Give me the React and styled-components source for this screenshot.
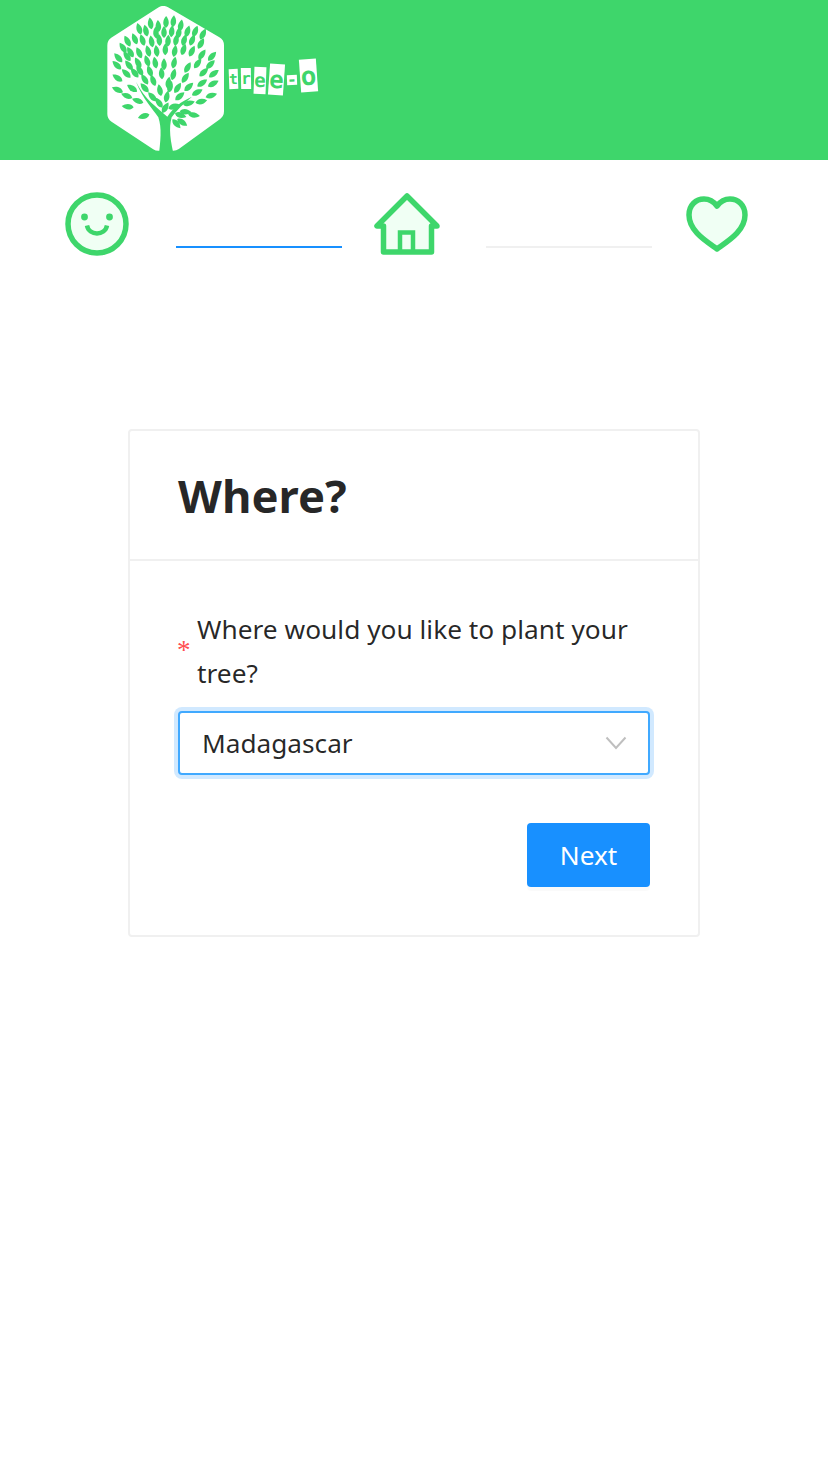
import React from "react";
import styled, { createGlobalStyle } from "styled-components";

const GREEN = "#3ed66b";
const TINT = "#f0fff4";

const GlobalStyle = createGlobalStyle`
  html, body {
    margin: 0;
    padding: 0;
    background: #fff;
    font-family: "Noto Sans", "Open Sans", sans-serif;
    color: rgba(0, 0, 0, 0.85);
  }
`;

// leaf positions, in the 720x480 space of the logo drawing
const leaves = [
  [182, 72], [205, 80], [228, 68], [250, 66], [272, 78],
  [148, 88], [168, 94], [198, 100], [222, 98], [245, 96], [266, 100], [292, 96], [315, 96], [338, 104],
  [113, 125], [135, 118], [158, 122], [185, 126], [208, 122], [234, 124], [258, 122], [282, 122], [306, 122], [332, 132],
  [100, 145], [122, 158], [148, 160], [175, 155], [200, 155], [226, 150], [254, 155], [280, 150], [305, 155], [335, 165], [365, 170],
  [86, 175], [112, 170], [145, 190], [172, 185], [196, 190], [222, 195], [252, 190], [292, 204], [322, 192], [360, 195],
  [82, 197], [118, 197], [150, 213], [180, 215], [215, 222], [250, 225], [285, 235], [340, 218], [370, 222],
  [84, 235], [110, 222], [135, 220], [165, 240], [190, 243], [235, 250], [262, 265], [295, 262], [335, 250], [368, 252],
  [84, 270], [128, 266], [165, 265], [210, 272], [240, 262], [320, 278], [362, 287],
  [112, 288], [188, 292], [230, 292], [268, 290], [332, 305],
  [115, 320], [145, 303], [208, 310], [225, 325], [250, 320], [295, 310], [310, 345],
  [163, 348], [270, 345], [285, 335], [258, 370], [275, 366],
];

function leafAngle(x, y) {
  return (Math.atan2(y - 330, x - 222) * 180) / Math.PI + 90;
}

function LogoMark() {
  return (
    <svg width="120" height="154" viewBox="0 0 360 462">
      <g transform="translate(-51 -18)">
        <path
          d="M220 46 L374 136 V334 L250 424 L205 424 L80 342 V136 Z"
          fill="#fff"
          stroke="#fff"
          strokeWidth="56"
          strokeLinejoin="round"
        />
        <path
          d="M138 245 C160 300 188 325 205 352 C216 385 212 420 205 480 H255 C240 420 236 385 245 352 C262 328 282 310 306 290 C272 305 250 322 232 350 C200 320 165 300 138 245 Z"
          fill={GREEN}
        />
        {leaves.map(([x, y]) => (
          <path
            key={`${x}-${y}`}
            d="M0 16 C-12 7 -10 -8 0 -20 C10 -8 12 7 0 16 Z"
            fill={GREEN}
            transform={`translate(${x} ${y}) rotate(${leafAngle(x, y)})`}
          />
        ))}
      </g>
    </svg>
  );
}

function SmileIcon() {
  return (
    <svg width="66" height="66" viewBox="0 0 66 66">
      <circle cx="33" cy="33" r="29" fill={TINT} stroke={GREEN} strokeWidth="5.5" />
      <circle cx="20.5" cy="26" r="3.4" fill={GREEN} />
      <circle cx="45.5" cy="26" r="3.4" fill={GREEN} />
      <path d="M23 34.5 C25 45 41 45 43 34.5" fill="none" stroke={GREEN} strokeWidth="4.5" />
    </svg>
  );
}

function HomeIcon() {
  return (
    <svg width="66" height="62" viewBox="0 0 66 62">
      <path
        d="M33 3 L3 33 H9.5 V59 H57.5 V33 H63 Z"
        fill={TINT}
        stroke={GREEN}
        strokeWidth="5.5"
        strokeLinejoin="round"
      />
      <path d="M26 59 V39.5 H39 V59" fill="none" stroke={GREEN} strokeWidth="4.5" />
    </svg>
  );
}

function HeartIcon() {
  return (
    <svg width="62" height="56" viewBox="0 0 62 56">
      <path
        d="M31 53 C20 45 3 35 3 19 C3 9 10 3 18 3 C24 3 28 6 31 10 C34 6 38 3 44 3 C52 3 59 9 59 19 C59 35 42 45 31 53 Z"
        fill={TINT}
        stroke={GREEN}
        strokeWidth="5.5"
        strokeLinejoin="round"
      />
    </svg>
  );
}

function Chevron() {
  return (
    <svg width="22" height="14" viewBox="0 0 22 14">
      <path d="M1.5 1.5 L11 12 L20.5 1.5" fill="none" stroke="#bfbfbf" strokeWidth="2" />
    </svg>
  );
}

const tiles = [
  { ch: "t", w: 9, h: 20, rot: -2, up: 0 },
  { ch: "r", w: 10, h: 21, rot: -1, up: 0 },
  { ch: "e", w: 12, h: 27, rot: 2, up: 2 },
  { ch: "e", w: 15, h: 31, rot: 4, up: 1 },
  { ch: "-", w: 10, h: 10, rot: -2, up: 1 },
  { ch: "o", w: 17, h: 33, rot: -4, up: -3 },
];

export default function App() {
  return (
    <Page>
      <GlobalStyle />
      <Header>
        <LogoMark />
        <WordMark>
          {tiles.map((t, i) => (
            <Tile key={i} $w={t.w} $h={t.h} $rot={t.rot} $up={t.up}>
              {t.ch}
            </Tile>
          ))}
        </WordMark>
      </Header>
      <StepsRow>
        <StepIcon $gap={0}>
          <SmileIcon />
        </StepIcon>
        <StepLine $done />
        <StepIcon $gap={32}>
          <HomeIcon />
        </StepIcon>
        <StepLine />
        <StepIcon $gap={34}>
          <HeartIcon />
        </StepIcon>
      </StepsRow>
      <Card>
        <CardHead>
          <CardTitle>Where?</CardTitle>
        </CardHead>
        <CardBody>
          <FieldLabel>
            <Required>*</Required>
            <LabelText>Where would you like to plant your tree?</LabelText>
          </FieldLabel>
          <SelectBox>
            <span>Madagascar</span>
            <Chevron />
          </SelectBox>
          <Actions>
            <NextButton>Next</NextButton>
          </Actions>
        </CardBody>
      </Card>
    </Page>
  );
}

const Page = styled.div`
  width: 828px;
  min-height: 1470px;
  background: #fff;
`;

const Header = styled.header`
  height: 160px;
  background: ${GREEN};
  display: flex;
  align-items: flex-start;
  padding: 6px 0 0 107px;
  box-sizing: border-box;
  overflow: hidden;
`;

const WordMark = styled.div`
  display: flex;
  align-items: center;
  gap: 3px;
  margin: 56px 0 0 2px;
`;

const Tile = styled.span`
  display: flex;
  align-items: center;
  justify-content: center;
  flex: none;
  width: ${(p) => p.$w}px;
  height: ${(p) => p.$h}px;
  background: #fff;
  color: ${GREEN};
  font-family: "DejaVu Sans Mono", monospace;
  font-size: ${(p) => Math.min(p.$w * 1.6, 26)}px;
  font-weight: 700;
  line-height: 1;
  transform: translateY(${(p) => p.$up}px) rotate(${(p) => p.$rot}deg);
`;

const StepsRow = styled.nav`
  display: flex;
  align-items: flex-start;
  padding: 31px 0 0 64px;
  height: 269px;
  box-sizing: border-box;
`;

const StepIcon = styled.div`
  display: flex;
  margin-left: ${(p) => p.$gap}px;
  margin-top: ${(p) => (p.$gap === 34 ? 5 : p.$gap === 32 ? 2 : 0)}px;
`;

const StepLine = styled.div`
  width: 166px;
  height: 2px;
  margin: 55px 0 0 46px;
  background: ${(p) => (p.$done ? "#1890ff" : "#f0f0f0")};
`;

const Card = styled.section`
  width: 572px;
  box-sizing: border-box;
  margin: 0 auto;
  border: 2px solid #f0f0f0;
  border-radius: 4px;
`;

const CardHead = styled.div`
  height: 130px;
  box-sizing: border-box;
  padding: 0 48px;
  display: flex;
  align-items: center;
  border-bottom: 2px solid #f0f0f0;
`;

const CardTitle = styled.h1`
  margin: 0;
  font-size: 45.4px;
  font-weight: 700;
  color: rgba(0, 0, 0, 0.85);
`;

const CardBody = styled.div`
  padding: 46px 48px 48px;
`;

const FieldLabel = styled.div`
  display: flex;
  align-items: center;
  margin-bottom: 16px;
`;

const Required = styled.span`
  flex: none;
  width: 11px;
  margin: -2px 8px 0 -1px;
  color: #ff4d4f;
  font-family: "Liberation Serif", serif;
  font-size: 27px;
  line-height: 1;
`;

const LabelText = styled.div`
  margin-left: 1px;
  font-size: 26.3px;
  line-height: 44px;
  color: rgba(0, 0, 0, 0.85);
`;

const SelectBox = styled.div`
  height: 64px;
  box-sizing: border-box;
  display: flex;
  align-items: center;
  justify-content: space-between;
  padding: 0 21px 0 22px;
  background: #fff;
  border: 2px solid #40a9ff;
  border-radius: 4px;
  box-shadow: 0 0 0 4px rgba(24, 144, 255, 0.2);
  font-size: 26.2px;
  color: rgba(0, 0, 0, 0.85);
`;

const Actions = styled.div`
  display: flex;
  justify-content: flex-end;
  margin-top: 48px;
`;

const NextButton = styled.button`
  width: 123px;
  height: 64px;
  padding: 0;
  border: 0;
  border-radius: 4px;
  background: #1890ff;
  color: #fff;
  font-family: inherit;
  font-size: 26.2px;
  box-shadow: 0 4px 0 rgba(0, 0, 0, 0.02);
`;
